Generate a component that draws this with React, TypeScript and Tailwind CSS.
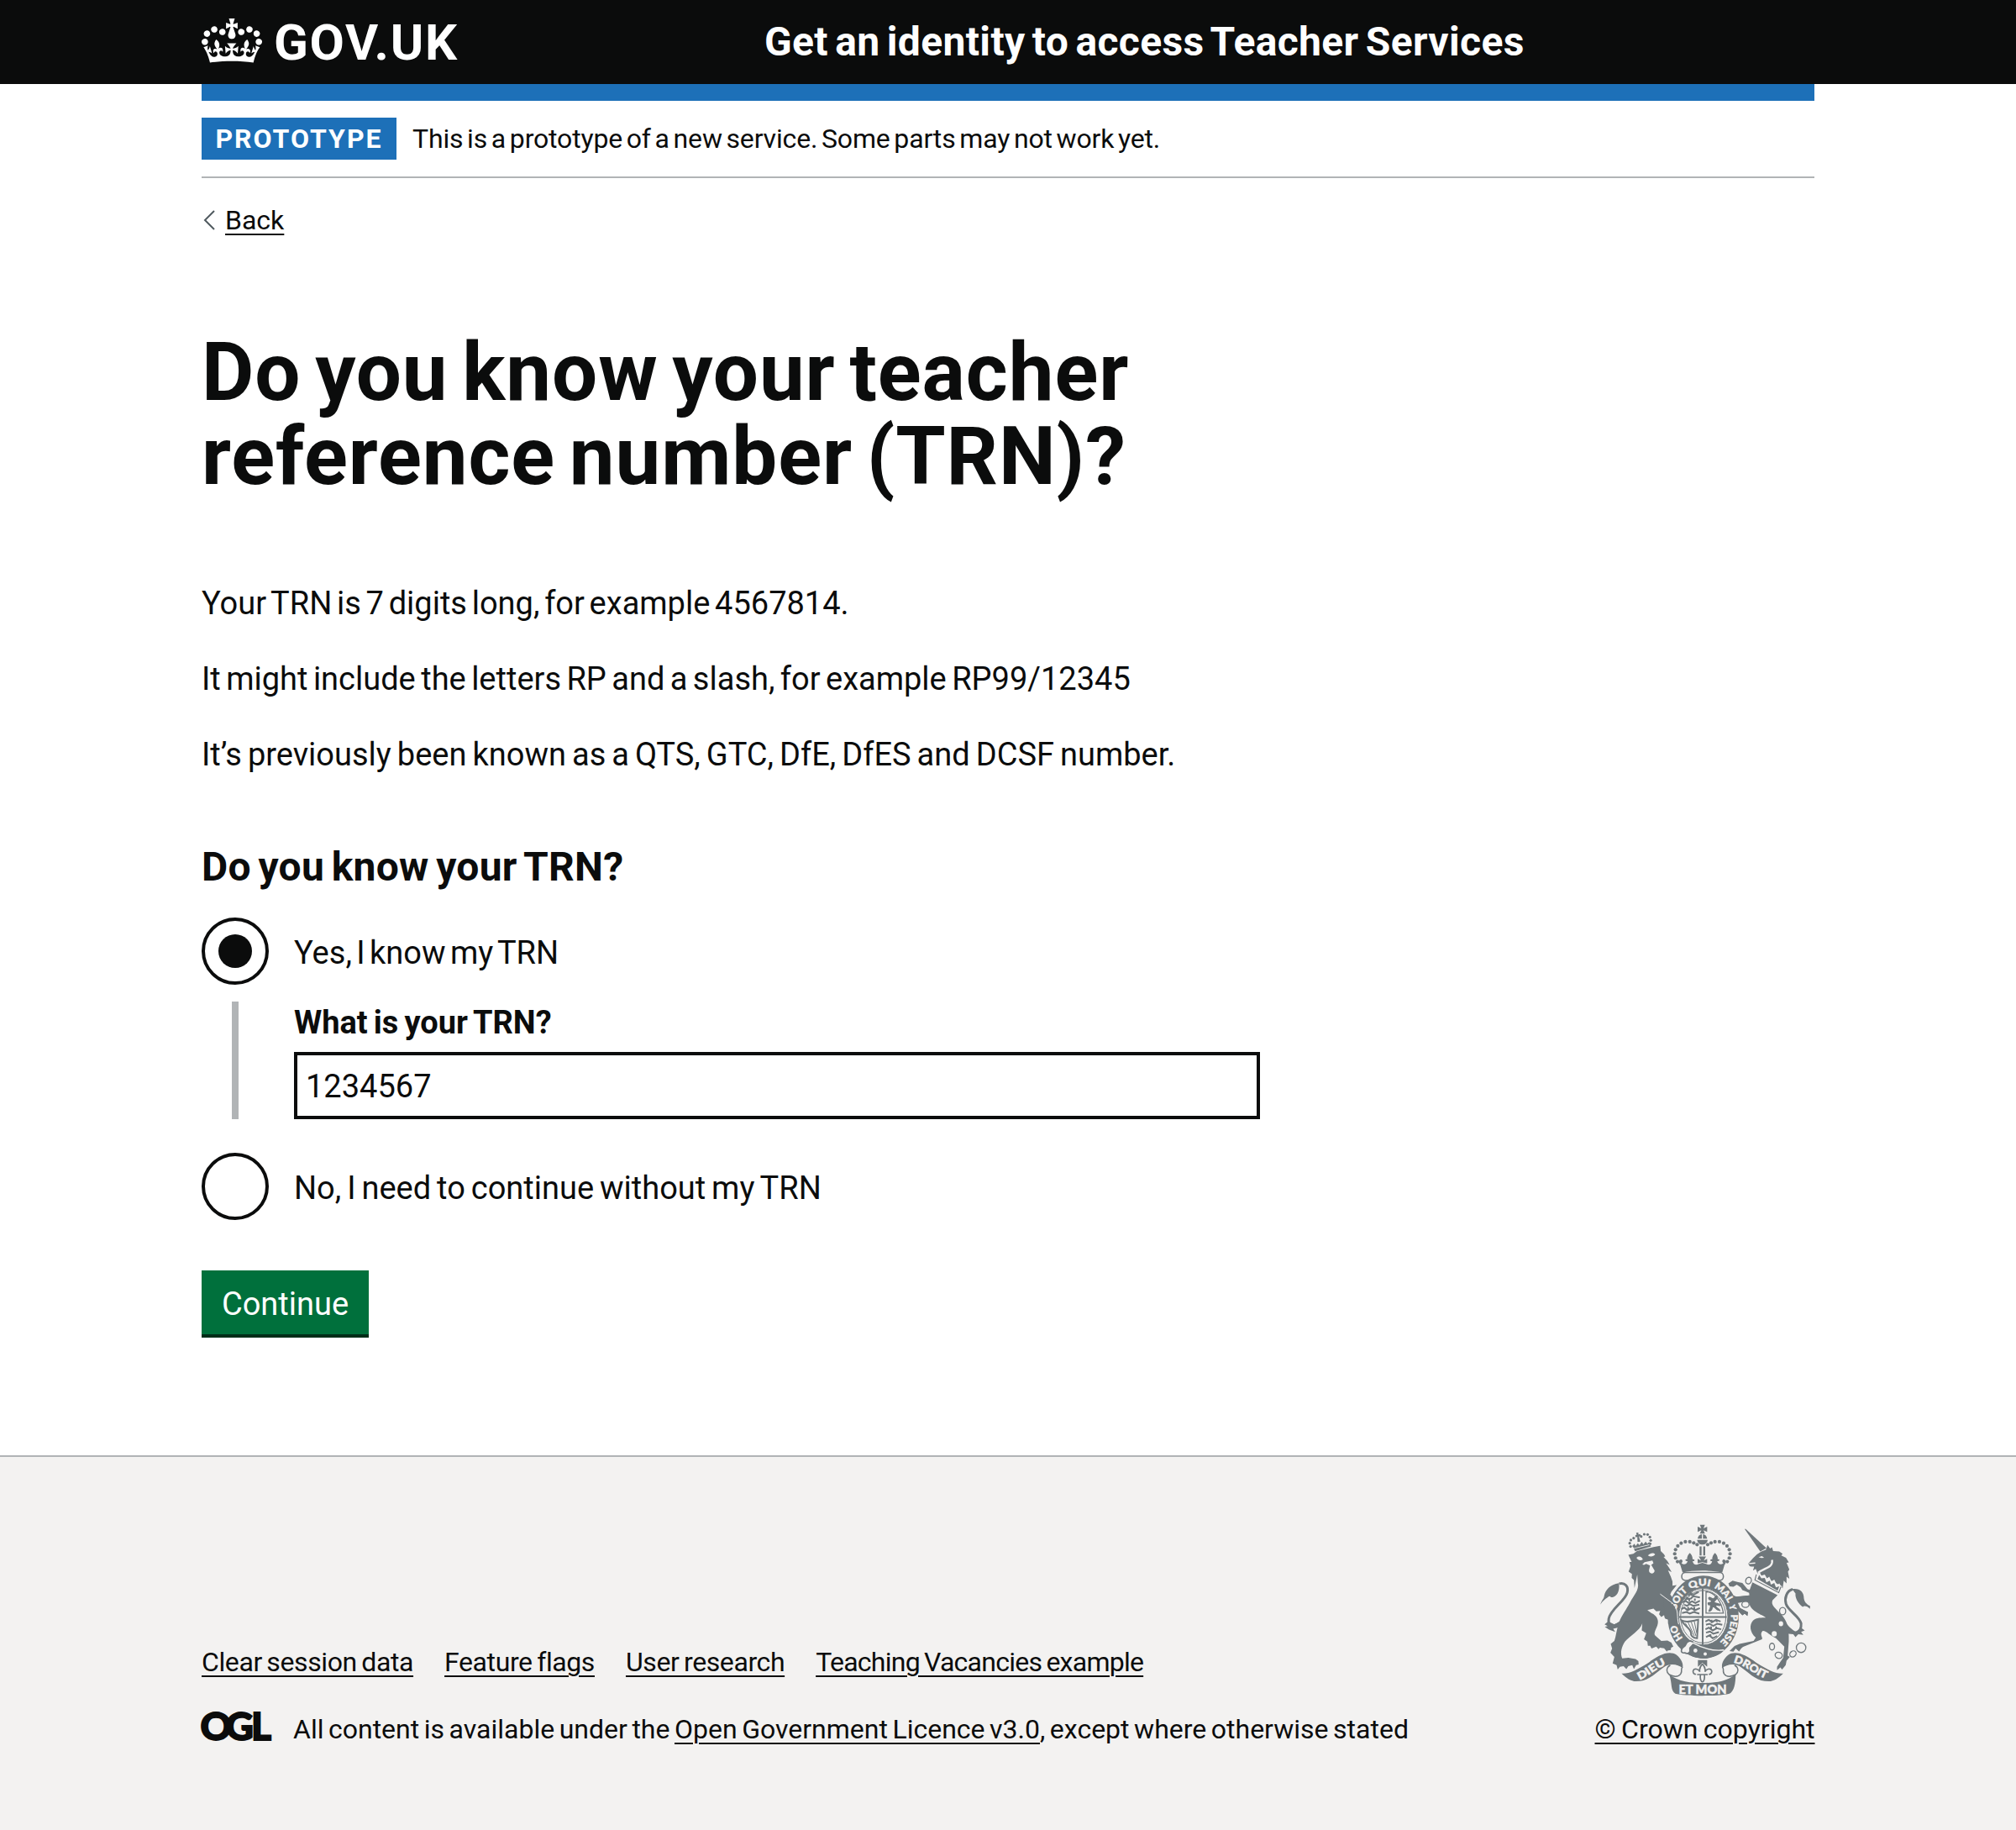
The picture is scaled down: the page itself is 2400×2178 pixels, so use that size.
import React from "react";

const link =
  "underline decoration-2 underline-offset-[5px] decoration-[#0b0c0c] text-[#0b0c0c]";

function Crown() {
  return (
    <svg viewBox="0 0 132 97" className="h-[53px] w-[72px] shrink-0" fill="currentColor">
      <path
        fillRule="evenodd"
        d="M25 30.2c3.5 1.5 7.7-.2 9.1-3.7 1.5-3.6-.2-7.8-3.9-9.2-3.6-1.4-7.6.3-9.1 3.9-1.4 3.5.3 7.5 3.9 9zM9 39.5c3.6 1.5 7.8-.2 9.2-3.7 1.5-3.6-.2-7.8-3.9-9.1-3.6-1.5-7.6.2-9.1 3.8-1.4 3.5.3 7.5 3.8 9zM4.4 57.2c3.5 1.5 7.7-.2 9.1-3.8 1.5-3.6-.2-7.7-3.9-9.1-3.5-1.5-7.6.3-9.1 3.8-1.4 3.5.3 7.6 3.9 9.1zm38.3-21.4c3.5 1.5 7.7-.2 9.1-3.8 1.5-3.6-.2-7.7-3.9-9.1-3.6-1.5-7.6.3-9.1 3.8-1.3 3.6.4 7.7 3.9 9.1zm64.4-5.6c-3.6 1.5-7.8-.2-9.1-3.7-1.5-3.6.2-7.8 3.8-9.2 3.6-1.4 7.7.3 9.2 3.9 1.3 3.5-.4 7.5-3.9 9zm15.9 9.3c-3.6 1.5-7.7-.2-9.1-3.7-1.5-3.6.2-7.8 3.7-9.1 3.6-1.5 7.7.2 9.2 3.8 1.5 3.5-.3 7.5-3.8 9zm4.7 17.7c-3.6 1.5-7.8-.2-9.2-3.8-1.5-3.6.2-7.7 3.9-9.1 3.6-1.5 7.7.3 9.2 3.8 1.3 3.5-.4 7.6-3.9 9.1zM89.3 35.8c-3.6 1.5-7.8-.2-9.2-3.8-1.4-3.6.2-7.7 3.9-9.1 3.6-1.5 7.7.3 9.2 3.8 1.4 3.6-.3 7.7-3.9 9.1zM69.7 17.7l8.9 4.7V9.3l-8.9 2.8c-.2-.3-.5-.6-.9-.9L72.4 0H59.6l3.5 11.2c-.3.3-.6.5-.9.9l-8.8-2.8v13.1l8.8-4.7c.3.3.6.7.9.9l-5 15.4v.1c-.2.8-.4 1.6-.4 2.4 0 4.1 3.1 7.5 7 8.1h.2c.3 0 .7.1 1 .1.4 0 .7 0 1-.1h.2c4-.6 7.1-4.1 7.1-8.1 0-.8-.1-1.7-.4-2.4V34l-5.1-15.4c.4-.2.7-.6 1-.9zM66 92.8c16.9 0 32.8 1.1 47.1 3.2 4-16.9 8.9-26.7 14-33.5l-9.6-3.4c1 4.9 1.1 7.2 0 10.2-1.5-1.4-3-4.3-4.2-8.7L108.6 76c2.8-2 5-3.2 7.5-3.3-4.4 9.4-10 11.9-13.6 11.2-4.3-.8-6.3-4.6-5.6-7.9 1-4.7 5.7-5.9 8-.5 4.3-8.7-3-11.4-7.6-8.8 7.1-7.2 7.9-13.5 2.1-21.1-8 6.1-8.1 12.3-4.5 20.8-4.7-5.4-12.1-2.5-9.5 6.2 3.4-5.2 7.9-2 7.2 3.1-.6 4.3-6.4 7.8-13.5 7.2-10.3-.9-10.9-8-11.2-13.8 2.5-.5 7.1 1.8 11 7.3L80.2 60c-4.1 4.4-8 5.3-12.3 5.4 1.4-4.4 8-11.6 8-11.6H55.5s6.4 7.2 7.9 11.6c-4.2-.1-8-1-12.3-5.4l1.4 16.4c3.9-5.5 8.5-7.7 10.9-7.3-.3 5.8-.9 12.8-11.1 13.8-7.2.6-12.9-2.9-13.5-7.2-.7-5 3.8-8.3 7.1-3.1 2.7-8.7-4.6-11.6-9.4-6.2 3.7-8.5 3.6-14.7-4.6-20.8-5.8 7.6-5 13.9 2.2 21.1-4.7-2.6-11.9.1-7.7 8.8 2.3-5.5 7.1-4.2 8.1.5.7 3.3-1.3 7.1-5.7 7.9-3.5.7-9-1.8-13.5-11.2 2.5.1 4.7 1.3 7.5 3.3l-4.7-15.4c-1.2 4.4-2.7 7.2-4.3 8.7-1.1-3-.9-5.3 0-10.2l-9.5 3.4c5 6.9 9.9 16.7 14 33.5 14.8-2.1 30.8-3.2 47.7-3.2z"
      />
    </svg>
  );
}

const INK = "#6f777b";
const PAPER = "#f3f2f1";

const crownBeads: [number, number][] = [
  [418, 143], [406, 137], [392, 133], [376, 133], [361, 138], [349, 148], [341, 161],
  [338, 176], [341, 191], [348, 204],
];
const miniBeads: [number, number][] = [
  [180, 150], [177, 138], [181, 127], [191, 120], [218, 114], [229, 106], [241, 107], [249, 116], [252, 128], [250, 140],
];
const loops: [number, number, number, number, number][] = [
  [602, 272, 10, 12, 20], [591, 357, 13, 11, 0], [724, 381, 11, 13, 0], [686, 508, 9, 12, 0],
  [710, 539, 13, 11, 20], [761, 534, 12, 10, -40], [790, 512, 17, 17, 0],
];
const spots: [number, number, number, number][] = [
  [718, 426, 8, 9], [694, 462, 9, 10],
];

function Crest() {
  return (
    <svg viewBox="72 70 750 616" className="h-[205px] w-[250px]" fill={INK}>
      <defs>
        <path id="garter" d="M440 514 A99 112 0 0 1 440 290 A99 112 0 0 1 440 514" />
        <path id="dieu" d="M212 627 C245 616 275 580 325 566" />
        <path id="droit" d="M547 566 C588 571 624 611 672 626" />
      </defs>

      {/* Lion */}
      <path
        d="M139 283C160 278 174 292 168 315C160 345 108 375 102 408C99 428 108 436 124 432C140 428 155 412 168 395"
        fill="none" stroke={INK} strokeWidth="9"
      />
      <path d="M72 358C78 338 84 340 86 325C90 305 108 285 138 281C142 300 136 325 118 331C105 335 110 322 100 330C88 340 82 342 72 358Z" />
      <path d="M100 418L122 428L160 408L150 425L133 440L118 444L125 455L103 447L88 437L98 434L87 428Z" />
      <path d="M172 180L190 176L203 166L262 152L286 147L288 166L300 178L304 186L298 187L312 202L320 216L307 210L318 226L327 241L314 235L324 258L330 275L330 290L345 288L326 312L322 322L345 352C350 375 343 395 350 428L342 420L335 432L325 423L315 426L316 412L304 408L300 395L290 402L282 392L286 380L272 382L262 372L240 377L254 388C276 398 282 415 276 432C270 448 262 460 268 468L290 488L312 486L326 494L333 508L325 512L324 520L312 522L310 526L300 514L285 512L280 517L272 508L255 515L250 505L242 505L240 490L228 482L236 460L220 450L222 425C212 452 178 468 160 490C148 508 142 530 150 550L172 548L198 552L208 560L209 572L200 574L192 588L186 574L172 578L165 588L155 578L142 580L134 590L130 574L116 568L122 545L108 530L114 515L109 498L122 488C128 470 130 448 137 425C150 392 165 375 178 350C190 326 212 305 206 280L204 250L194 298L192 270L184 262L185 248L173 240L180 220L176 205L184 205Z" />
      <path d="M201 190C210 182 220 186 224 196C215 202 206 198 201 190ZM242 182C252 172 262 172 268 178C262 186 252 188 242 182ZM222 214L230 206L258 200L262 210L254 216L266 236C266 250 244 250 246 234L250 218L236 212L228 216Z" fill={PAPER} />
      {/* Lion's crown */}
      {miniBeads.map(([x, y]) => (
        <circle key={`${x}-${y}`} cx={x} cy={y} r="4.8" />
      ))}
      <path d="M192 158L250 144L253 150L196 167ZM186 148L194 140L198 148L206 138L212 145L220 133L226 142L234 132L240 140L247 133L248 142L192 156ZM200 101L208 100L208 107L215 105L216 113L210 114L215 132L205 134L204 115L198 117L197 109L202 108Z" />

      {/* Unicorn */}
      <path
        d="M760 303C738 308 730 335 736 355C742 378 785 400 790 425C792 445 785 455 765 460"
        fill="none" stroke={INK} strokeWidth="9"
      />
      <path d="M758 302C785 298 800 312 800 335C802 350 812 358 822 362V373C812 362 800 360 796 366C780 355 768 335 770 318ZM732 415C742 435 760 450 772 455L790 440L803 450L790 455L798 466L780 464L770 474L762 464L745 462Z" />
      <path d="M588 87L592 87L666 156L644 168Z" />
      <path d="M670 144L679 157L686 153L690 166L712 168L724 176L719 182L736 190L746 207L738 208L748 232L743 240L748 265L738 258L738 282L728 272L724 300L712 282L704 288L694 268L684 274L676 258L668 264L660 250L648 254L642 242L634 246L628 230L618 236L622 222L612 222L606 220L601 211L618 192L632 178L648 168L664 162Z" />
      <path d="M638 188L650 184L658 190L648 191Z" fill={PAPER} />
      <path d="M686 198C692 225 660 225 636 244" stroke={PAPER} strokeWidth="7" fill="none" />
      <path d="M604 211L626 209" stroke={PAPER} strokeWidth="4" fill="none" />
      <path d="M630 246L722 292L712 318L622 272Z" fill={PAPER} />
      <path d="M630 250L625 270L710 315L718 294" fill="none" stroke={INK} strokeWidth="3.5" />
      <path d="M634 266L640 252L648 264L660 262L666 278L678 272L682 286L694 280L700 296L712 292L706 308Z" />
      <path d="M616 278L706 324L688 342C680 360 700 372 722 396C738 415 745 435 746 470L746 490L742 540L750 545L738 558L735 574L722 590L716 582L704 592L704 580L714 565L726 548L730 508L700 478C680 470 665 450 652 452C640 465 655 475 650 482L592 505C575 510 572 522 568 525L556 515L548 526L534 524L552 506L570 498L620 488L628 476C605 455 605 430 618 415C630 402 650 405 664 404C650 392 612 385 603 350L575 345L562 352L570 370L600 385L598 398L588 390L580 396L560 376L545 340L548 325L560 330L605 325L604 316L590 310L580 306L574 296L560 286L548 294L534 292L530 282L545 272L565 277L580 280L590 292L598 302L606 305Z" />
      {loops.map(([x, y, rx, ry, a]) => (
        <ellipse key={`${x}-${y}`} cx={x} cy={y} rx={rx} ry={ry} transform={`rotate(${a} ${x} ${y})`} fill={PAPER} stroke={INK} strokeWidth="4" />
      ))}
      {spots.map(([x, y, rx, ry]) => (
        <ellipse key={`${x}-${y}`} cx={x} cy={y} rx={rx} ry={ry} fill={PAPER} />
      ))}

      {/* Royal crown */}
      {crownBeads.map(([x, y]) => (
        <g key={`${x}-${y}`}>
          <circle cx={x} cy={y} r="6.3" />
          <circle cx={874 - x} cy={y} r="6.3" />
        </g>
      ))}
      <path d="M428 72H446L441 85L454 79V98L441 92L446 104H428L433 92L420 98V79L433 85ZM420 122C421 112 427 107 435 106V122ZM439 106C447 107 453 112 454 122H439ZM418 126H456C454 138 446 143 437 143C428 143 420 138 418 126ZM427 150H434V182H427ZM440 150H447V182H440ZM424 186H450L442 200L454 194V210L437 206L420 210V194L432 200Z" />
      <path d="M358 216C350 206 352 196 362 196C368 200 366 206 362 210C372 218 382 212 384 202C374 204 374 194 382 196C382 186 386 178 392 173C398 178 402 186 402 196C410 194 412 204 402 202C404 214 414 218 424 212L437 208L450 212C460 218 470 214 472 202C462 204 464 194 472 196C472 186 476 178 482 173C488 178 492 186 492 196C500 194 500 204 490 202C492 212 502 218 512 210C508 206 506 200 512 196C522 196 524 206 516 216L508 243C470 234 404 234 366 243Z" />
      <rect x="363" y="243" width="149" height="28" rx="13" fill={PAPER} stroke={INK} strokeWidth="4.5" />

      {/* Garter and shield */}
      <path d="M440 254A127 148 0 1 1 439.9 254ZM440 299A88 101 0 1 0 440.1 299Z" fillRule="evenodd" />
      <ellipse cx="440" cy="401" rx="88" ry="101" fill={PAPER} stroke={INK} strokeWidth="3" />
      <ellipse cx="440" cy="401" rx="81" ry="94" fill="none" stroke={INK} strokeWidth="3" />
      <path d="M350 402H524M438 300V502" stroke={INK} strokeWidth="6" fill="none" />
      <path
        d="M386 326L394 318L402 324L424 312M384 330L378 338L396 336L404 328L428 332M366 350L376 344L388 352L400 346L412 352L428 344M372 358L382 362L392 356L404 362L426 358M362 374L372 368L384 378L398 370L410 378L428 370M364 388L380 384L392 390L406 384L426 390M448 418L460 412L472 420L486 412L502 418M450 430L462 426L476 434L490 426L508 430M448 446L460 440L474 450L488 442L504 446M450 458L464 454L476 462L496 456M450 474L462 468L474 478L490 470M398 314V326M410 344V336M390 346V338M408 376V366M386 378V366M470 412V424M488 420V410M468 446V436M486 446V436M466 476V464"
        stroke={INK} strokeWidth="6" fill="none"
      />
      <path d="M450 312C480 312 505 345 512 388H450Z" fill="none" stroke={INK} strokeWidth="4" />
      <path d="M458 332C466 326 470 338 478 334C484 330 482 322 490 326C496 334 484 344 480 348C488 354 498 350 504 360C500 366 492 360 486 362C490 370 502 372 502 382L490 378C484 374 478 366 474 368C474 376 466 386 458 382C460 374 466 368 464 360C458 362 454 356 456 350C462 348 468 350 468 344C464 342 456 340 458 332Z" />
      <path d="M362 414C380 424 400 416 422 412L418 478C404 478 394 468 396 458C392 438 370 434 362 414Z" fill="none" stroke={INK} strokeWidth="6" />
      <path d="M376 424L400 464M386 422L408 470M397 420L414 470M408 418L417 460" stroke={INK} strokeWidth="3" fill="none" />
      <g fill={PAPER} stroke={PAPER} strokeWidth="1.2" fontFamily="Lato, sans-serif" fontWeight="900" fontSize="34">
        <text><textPath href="#garter" startOffset="84" textLength="54" lengthAdjust="spacingAndGlyphs">HO</textPath></text>
        <text><textPath href="#garter" startOffset="192" textLength="80" lengthAdjust="spacingAndGlyphs">SOIT</textPath></text>
        <text><textPath href="#garter" startOffset="282" textLength="74" lengthAdjust="spacingAndGlyphs">QUI</textPath></text>
        <text><textPath href="#garter" startOffset="370" textLength="76" lengthAdjust="spacingAndGlyphs">MAL</textPath></text>
        <text><textPath href="#garter" startOffset="454" textLength="20" lengthAdjust="spacingAndGlyphs">Y</textPath></text>
        <text><textPath href="#garter" startOffset="488" textLength="110" lengthAdjust="spacingAndGlyphs">PENSE</textPath></text>
      </g>
      {/* Buckle and strap */}
      <path d="M362 520C366 505 374 512 378 500C382 486 400 484 406 496C404 508 390 506 392 518C396 528 384 536 374 530C366 532 360 528 362 520Z" fill={PAPER} stroke={INK} strokeWidth="5" />
      <path d="M400 500C440 520 480 528 512 524C490 545 450 556 420 548C400 545 385 538 392 520Z" />
      <path d="M402 494C440 516 480 524 514 520" stroke={PAPER} strokeWidth="4" fill="none" />
      <circle cx="412" cy="522" r="7" fill={PAPER} />
      <circle cx="447" cy="534" r="6" fill={PAPER} />
      {/* Limbs that rest on the garter */}
      <path d="M298 332L334 360C348 378 342 400 350 428L340 420L334 432L324 424L314 426L316 410L302 405Z" />
      <path d="M286 320L332 354C354 376 344 400 352 428" stroke={PAPER} strokeWidth="3" fill="none" />
      <path d="M550 330L605 325L604 345L564 352L572 370L600 385L598 398L588 390L580 396L562 376L548 345Z" />

      {/* Motto ribbon */}
      <path d="M148 604C174 606 202 592 245 565C280 538 318 520 345 538C362 552 370 570 366 584C350 572 322 565 298 582C258 612 240 632 200 632C180 632 165 620 148 604Z" />
      <path d="M726 604C700 606 672 592 629 565C594 538 556 520 529 538C512 552 504 570 508 584C524 572 552 565 576 582C616 612 634 632 674 632C694 632 709 620 726 604Z" />
      <path d="M366 580C355 592 372 600 352 612C340 618 326 612 318 608C306 598 308 582 322 574M508 580C519 592 502 600 522 612C534 618 548 612 556 608C568 598 566 582 552 574" fill="none" stroke={INK} strokeWidth="4.5" />
      <path d="M318 606C350 634 400 638 437 638C474 638 524 634 556 606C556 640 550 668 534 676C500 686 374 686 340 676C322 664 330 640 318 606Z" />
      <path d="M421 556H454V580L437 566L421 580Z" />
      <path d="M437 570C444 578 450 586 446 598C450 588 466 584 470 594C472 604 464 608 460 606M437 570C430 578 424 586 428 598C424 588 408 584 404 594C402 604 410 608 414 606M418 608H456M430 610C428 622 432 634 437 634C442 634 446 622 444 610" fill="none" stroke={INK} strokeWidth="5" />
      <g fill={PAPER} stroke={PAPER} strokeWidth="1.4" fontFamily="Lato, sans-serif" fontWeight="900">
        <text x="352" y="676" fontSize="48" textLength="172" lengthAdjust="spacingAndGlyphs">ET MON</text>
        <text fontSize="38"><textPath href="#dieu" textLength="110" lengthAdjust="spacingAndGlyphs">DIEU</textPath></text>
        <text fontSize="38"><textPath href="#droit" textLength="130" lengthAdjust="spacingAndGlyphs">DROIT</textPath></text>
      </g>
    </svg>
  );
}

function Radio({ checked, children }: { checked?: boolean; children: React.ReactNode }) {
  return (
    <label className="flex h-20 items-center">
      <span className="flex size-20 items-center justify-center rounded-full border-4 border-[#0b0c0c]">
        {checked && <span className="size-10 rounded-full bg-[#0b0c0c]" />}
      </span>
      <span className="pt-[3px] pl-[30px] text-[38px] leading-[50px]">{children}</span>
    </label>
  );
}

export default function App() {
  return (
    <div className="flex min-h-[2178px] w-full flex-col bg-white font-[Roboto,'Liberation_Sans',sans-serif] text-[#0b0c0c]">
      <header className="h-[100px] bg-[#0b0c0c] px-[240px] text-white">
        <div className="flex h-full items-center pb-[4px]">
          <div className="flex w-[670px] items-center gap-[14px]">
            <Crown />
            <span className="pt-[6px] text-[60px] leading-[60px] font-bold tracking-[1.7px]">GOV.UK</span>
          </div>
          <span className="pt-1 text-[48px] leading-[50px] font-bold tracking-[0.35px] whitespace-nowrap [word-spacing:-4px]">
            Get an identity to access Teacher Services
          </span>
        </div>
      </header>

      <div className="px-[240px]">
        <div className="h-5 bg-[#1d70b8]" />
        <div className="flex items-center gap-[19px] border-b-2 border-[#b1b4b6] py-5">
          <strong className="flex h-[50px] w-[232px] items-center justify-center bg-[#1d70b8] text-[32px] leading-[50px] tracking-[2px] text-white">
            PROTOTYPE
          </strong>
          <span className="text-[32px] leading-[40px] tracking-[-0.17px] whitespace-nowrap [word-spacing:-3px]">
            This is a prototype of a new service. Some parts may not work yet.
          </span>
        </div>

        <a className="mt-[30px] flex w-fit items-center" href="#">
          <svg viewBox="0 0 14 24" className="ml-[2px] h-6 w-[14px]" fill="none" stroke="#505a5f" strokeWidth="2">
            <path d="M13 1L2 12L13 23" />
          </svg>
          <span className={`ml-3 text-[32px] leading-[40px] ${link}`}>Back</span>
        </a>

        <main className="mt-[111px] w-[1260px]">
          <h1 className="w-[1200px] text-[96px] leading-[100px] font-bold tracking-[0.9px] [word-spacing:-8px]">
            Do you know your teacher reference number (TRN)?
          </h1>
          <div className="mt-[100px] space-y-10 text-[38px] leading-[50px] whitespace-nowrap">
            <p className="[word-spacing:-3.7px]">Your TRN is 7 digits long, for example 4567814.</p>
            <p className="[word-spacing:-3px]">It might include the letters RP and a slash, for example RP99/12345</p>
            <p className="[word-spacing:-2.4px]">It’s previously been known as a QTS, GTC, DfE, DfES and DCSF number.</p>
          </div>
          <h2 className="mt-[79px] text-[48px] leading-[60px] font-bold tracking-[0.25px] [word-spacing:-3.5px]">
            Do you know your TRN?
          </h2>
          <div className="mt-[30px]">
            <Radio checked>
              <span className="[word-spacing:-4px]">Yes, I know my TRN</span>
            </Radio>
            <div className="mt-5 ml-9 h-[140px] border-l-8 border-[#b1b4b6] pl-[66px]">
              <div className="text-[38px] leading-[50px] font-bold [word-spacing:-2.4px]">What is your TRN?</div>
              <div className="mt-[10px] h-20 w-[1150px] border-4 border-[#0b0c0c] px-[10px] text-[38px] leading-[74px]">
                1234567
              </div>
            </div>
            <div className="mt-10">
              <Radio>
                <span className="[word-spacing:-2.5px]">No, I need to continue without my TRN</span>
              </Radio>
            </div>
          </div>
          <button className="mt-[60px] flex h-[76px] w-[199px] items-center justify-center bg-[#00703c] pt-[3px] text-[38px] leading-[38px] text-white shadow-[0_4px_0_#002d18]">
            Continue
          </button>
        </main>
      </div>

      <footer className="mt-[144px] flex flex-1 justify-between border-t-2 border-[#b1b4b6] bg-[#f3f2f1] px-[240px] text-[32px] leading-[40px] whitespace-nowrap">
        <div className="pt-[224px]">
          <nav className="flex gap-[37px] tracking-[-0.4px] [word-spacing:-2px]">
            <a href="#" className={link}>Clear session data</a>
            <a href="#" className={link}>Feature flags</a>
            <a href="#" className={link}>User research</a>
            <a href="#" className={`tracking-[-0.75px] ${link}`}>Teaching Vacancies example</a>
          </nav>
          <div className="mt-10 flex">
            <svg viewBox="0 0 82 34" className="-mt-px h-[34px] w-[82px] overflow-visible" fill="#0b0c0c">
              <text x="-1.5 28.5 59" y="33.5" fontFamily="Lato, sans-serif" fontWeight="900" fontSize="46" stroke="#0b0c0c" strokeWidth="1.8">
                OGL
              </text>
            </svg>
            <span className="ml-[27px] [word-spacing:-2.4px]">
              All content is available under the <a href="#" className={link}>Open Government Licence v3.0</a>, except where otherwise stated
            </span>
          </div>
        </div>
        <div className="flex w-[261px] flex-col items-center pt-[80px]">
          <Crest />
          <a href="#" className={`mt-[19px] [word-spacing:-1.5px] ${link}`}>© Crown copyright</a>
        </div>
      </footer>
    </div>
  );
}
